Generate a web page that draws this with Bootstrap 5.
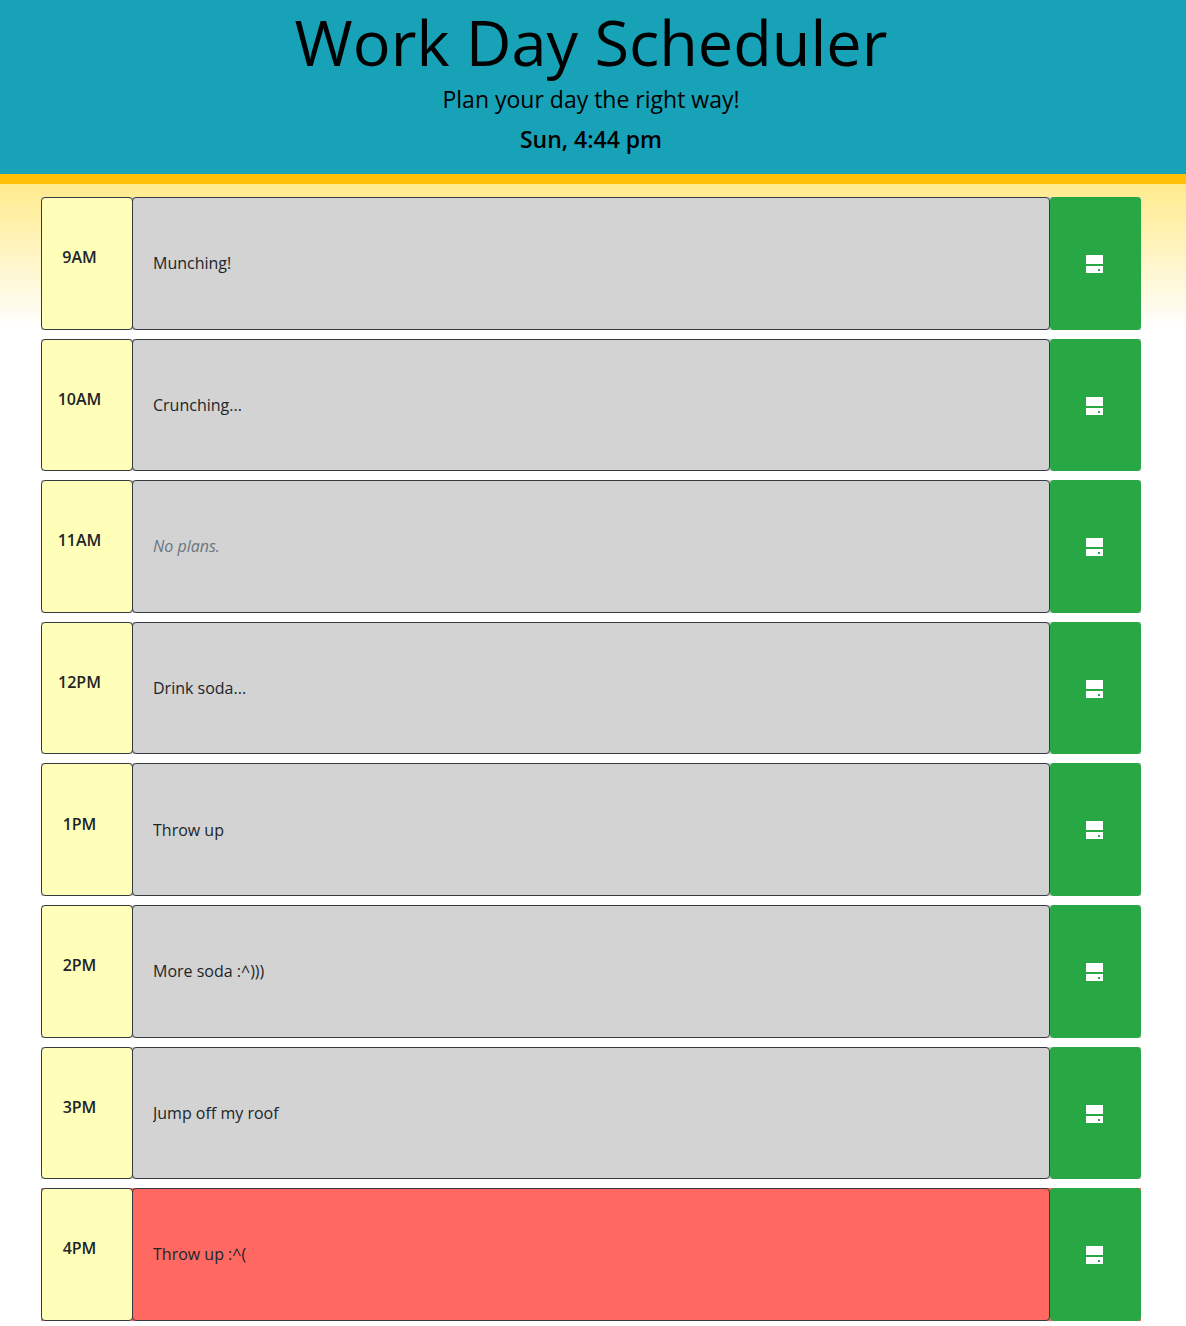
<!DOCTYPE html>
<html lang="en">
<head>
<meta charset="utf-8">
<meta name="viewport" content="width=device-width, initial-scale=1">
<title>Work Day Scheduler</title>
<link href="https://cdn.jsdelivr.net/npm/bootstrap@5.3.0/dist/css/bootstrap.min.css" rel="stylesheet">
<style>
  body { font-family: "Open Sans", sans-serif; color: #212529; background: #fff; }
  .masthead { background: #17a2b8; border-bottom: 10px solid #ffc107; color: #000; padding: 3px 4px 17px 0; }
  .masthead h1 { font-size: 63px; font-weight: 400; line-height: 78px; }
  .masthead p { font-size: 23px; line-height: 36px; }
  .masthead .clock { font-weight: 600; }
  .planner { background: linear-gradient(#ffeb8c, #fff) no-repeat 0 0 / 100% 146px; padding: 13px 45px 4px 41px; }
  .hours { gap: 9px; }
  .slot { height: 10vh; min-height: 80px; background: #d3d3d3; }
  .slot.present { background: #ff6961; }
  .save { width: 91px; }
  /* the hour cell shares its right border with the plan field */
  .hour { width: 92px; margin-right: -1px; background: #ffffba; border: 1px solid #343a40; border-radius: 4px; font-weight: 600; padding: 0 15px 12px 0; }
  .plan { background: transparent; border: 1px solid #343a40; border-radius: 4px; padding: 0 20px; color: #212529; }
  .plan::placeholder { color: #6c757d; font-style: italic; opacity: 1; }
  .save { background: #28a745; border: 0; border-radius: 4px; color: #fff; padding: 0 2px 2px 0; }
</style>
<script src="https://cdn.jsdelivr.net/npm/bootstrap@5.3.0/dist/js/bootstrap.bundle.min.js"></script>
</head>
<body>
<svg class="d-none" aria-hidden="true">
  <symbol id="disk" viewBox="0 0 17 18">
    <path fill="currentColor" fill-rule="evenodd" d="M0 0h17v9H0zM0 11h17v7H0zM12 14v2h2v-2z"/>
  </symbol>
</svg>
<header class="masthead text-center">
  <h1 class="mb-0">Work Day Scheduler</h1>
  <p class="mb-1">Plan your day the right way!</p>
  <p class="clock mb-0">Sun, 4:44 pm</p>
</header>
<main class="planner">
  <div class="hours d-flex flex-column">
    <div class="slot d-flex">
      <label class="hour d-flex align-items-center justify-content-center" for="h9">9AM</label>
      <input class="plan col" id="h9" type="text" placeholder="No plans." value="Munching!">
      <button class="save" type="button" aria-label="Save 9AM"><svg width="17" height="18"><use href="#disk"/></svg></button>
    </div>
    <div class="slot d-flex">
      <label class="hour d-flex align-items-center justify-content-center" for="h10">10AM</label>
      <input class="plan col" id="h10" type="text" placeholder="No plans." value="Crunching...">
      <button class="save" type="button" aria-label="Save 10AM"><svg width="17" height="18"><use href="#disk"/></svg></button>
    </div>
    <div class="slot d-flex">
      <label class="hour d-flex align-items-center justify-content-center" for="h11">11AM</label>
      <input class="plan col" id="h11" type="text" placeholder="No plans.">
      <button class="save" type="button" aria-label="Save 11AM"><svg width="17" height="18"><use href="#disk"/></svg></button>
    </div>
    <div class="slot d-flex">
      <label class="hour d-flex align-items-center justify-content-center" for="h12">12PM</label>
      <input class="plan col" id="h12" type="text" placeholder="No plans." value="Drink soda...">
      <button class="save" type="button" aria-label="Save 12PM"><svg width="17" height="18"><use href="#disk"/></svg></button>
    </div>
    <div class="slot d-flex">
      <label class="hour d-flex align-items-center justify-content-center" for="h13">1PM</label>
      <input class="plan col" id="h13" type="text" placeholder="No plans." value="Throw up">
      <button class="save" type="button" aria-label="Save 1PM"><svg width="17" height="18"><use href="#disk"/></svg></button>
    </div>
    <div class="slot d-flex">
      <label class="hour d-flex align-items-center justify-content-center" for="h14">2PM</label>
      <input class="plan col" id="h14" type="text" placeholder="No plans." value="More soda :^)))">
      <button class="save" type="button" aria-label="Save 2PM"><svg width="17" height="18"><use href="#disk"/></svg></button>
    </div>
    <div class="slot d-flex">
      <label class="hour d-flex align-items-center justify-content-center" for="h15">3PM</label>
      <input class="plan col" id="h15" type="text" placeholder="No plans." value="Jump off my roof">
      <button class="save" type="button" aria-label="Save 3PM"><svg width="17" height="18"><use href="#disk"/></svg></button>
    </div>
    <div class="slot present d-flex">
      <label class="hour d-flex align-items-center justify-content-center" for="h16">4PM</label>
      <input class="plan col" id="h16" type="text" placeholder="No plans." value="Throw up :^(">
      <button class="save" type="button" aria-label="Save 4PM"><svg width="17" height="18"><use href="#disk"/></svg></button>
    </div>
  </div>
</main>
</body>
</html>
